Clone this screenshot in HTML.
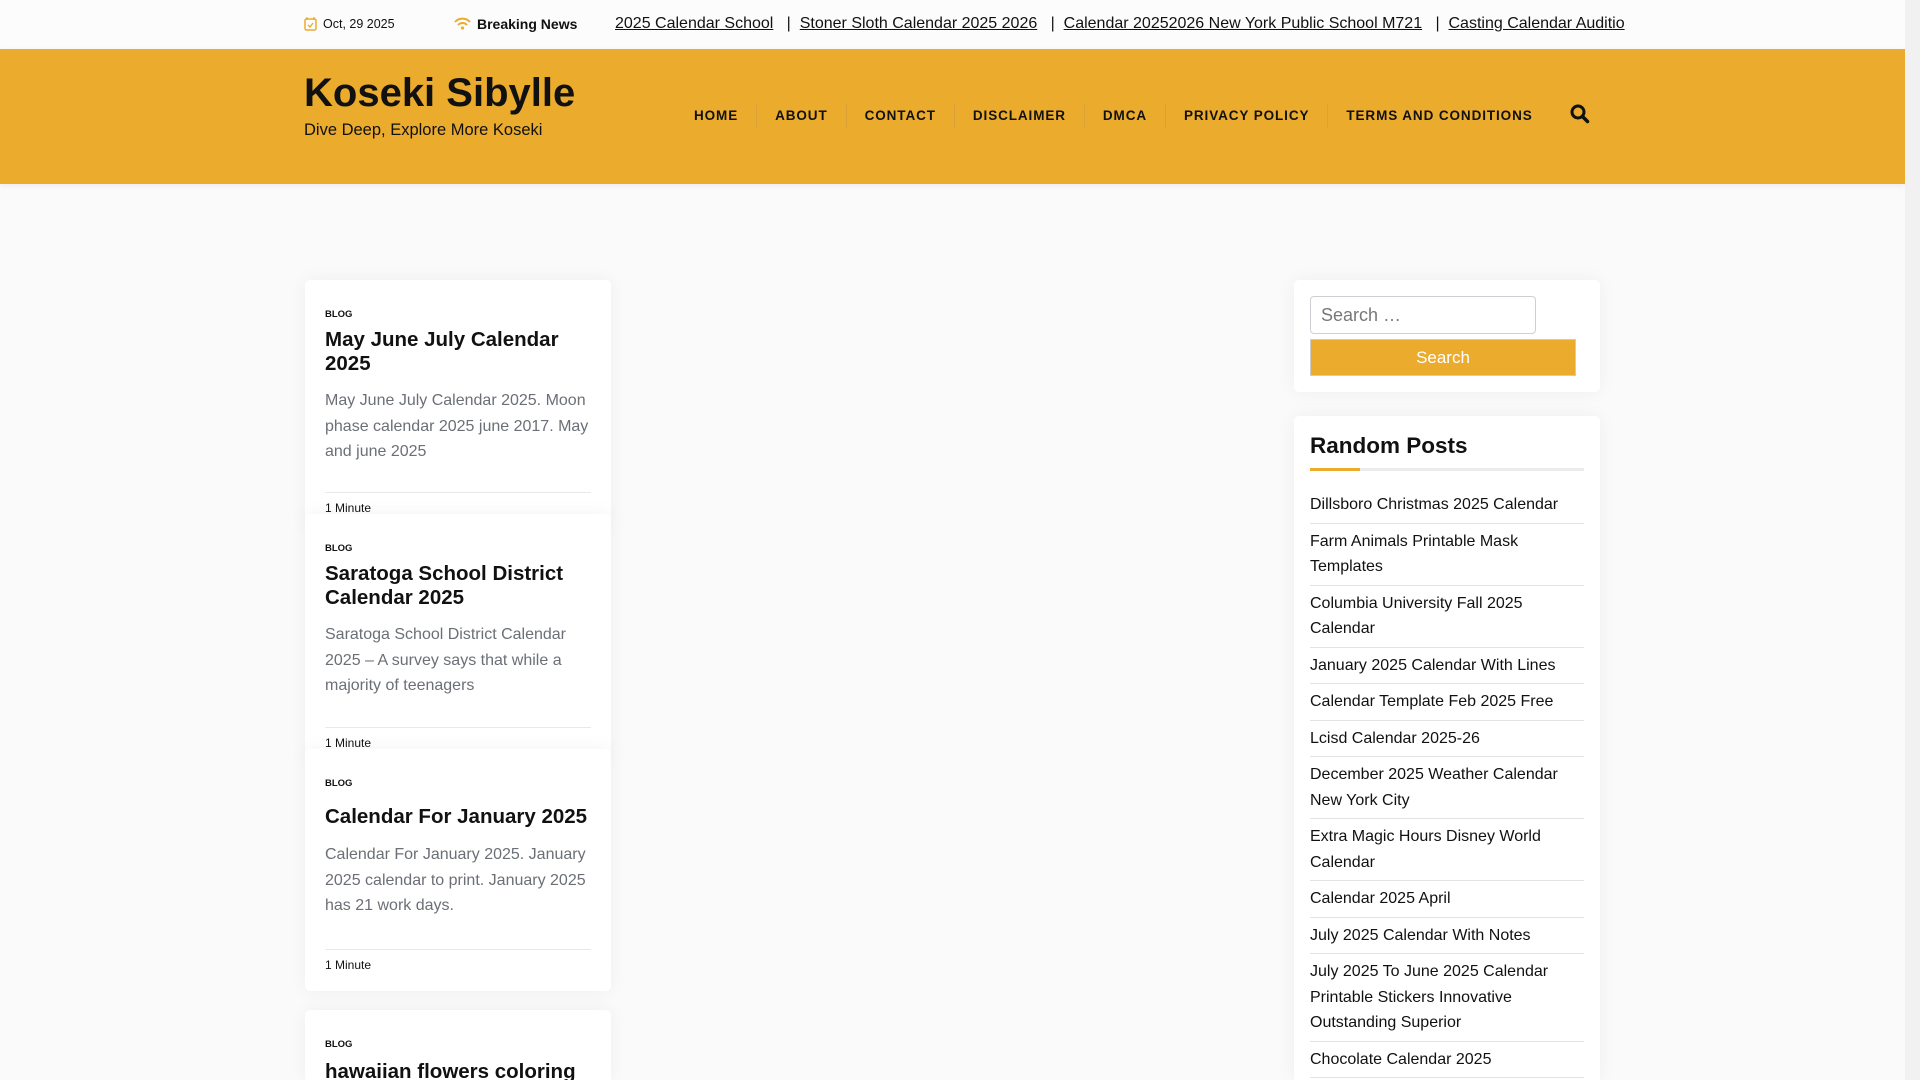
<!DOCTYPE html>
<html><head><meta charset="utf-8"><style>
*{box-sizing:border-box;margin:0;padding:0}
html{width:1920px;height:1080px;overflow:hidden}
body{width:1920px;height:1080px;overflow:hidden;background:#fafafa;font-family:"Liberation Sans",Arial,sans-serif;color:#111;position:relative}
.sb{position:absolute;right:0;top:0;width:15px;height:1080px;background:#f1f1f1}
.top{position:absolute;left:0;top:0;width:1905px;height:49px;background:#fcfcfc}
.top .d{position:absolute;left:304px;top:17px;font-size:12.5px}
.top .b{position:absolute;left:454px;top:16px;font-size:14px;font-weight:bold}
.top .t{position:absolute;left:615px;top:15px;font-size:16px;white-space:nowrap}
.top .t a{color:#111;text-decoration:underline}
.hdr{position:absolute;left:0;top:49px;width:1905px;height:135px;background:#ebab2d;box-shadow:0 2px 6px rgba(0,0,0,.06)}
.logo{position:absolute;left:304px;top:22px;font-size:40px;font-weight:bold}
.tag{position:absolute;left:304px;top:72px;font-size:16.5px}
.nav{position:absolute;left:676px;top:55px;display:flex;font-size:13.5px;font-weight:bold;letter-spacing:.9px}
.nav span{padding:0 18px;border-left:1px solid #dba23a;height:24px;line-height:24px}
.nav span:first-child{border:none}
.card{position:absolute;left:305px;width:306px;background:#fff;border-radius:5px;box-shadow:0 0 18px rgba(0,0,0,.05);padding:0 20px;overflow:hidden}
.card .c{font-size:9.5px;font-weight:bold;margin-top:29px}
.card h2{font-size:20.5px;line-height:24px;margin-top:8px}
.card p{font-size:16px;line-height:25.5px;color:#6b6f76;margin-top:12px}
.card .m{border-top:1px solid #e8e8e8;font-size:12px;padding-top:8px;position:absolute;left:20px;right:20px}
.w{position:absolute;left:1294px;width:306px;background:#fff;border-radius:5px;box-shadow:0 0 18px rgba(0,0,0,.05);padding:0 16px;overflow:hidden}
.in{position:absolute;left:16px;top:16px;width:226px;height:38px;border:1px solid #ccd0d4;border-radius:4px;font-size:18px;color:#777;padding:8px 10px}
.btn{position:absolute;left:16px;top:59px;width:266px;height:37px;background:#ebab2d;border:1px solid #ccc;color:#fff;font-size:17px;text-align:center;line-height:35px}
.rp h3{font-size:22.5px;margin-top:17px}
.ul{margin-top:9px;height:3px;background:#ebebeb;position:relative}
.ul:before{content:"";position:absolute;left:0;top:0;width:50px;height:3px;background:#ebab2d}
.rp ul{list-style:none;margin-top:16px}
.rp li{font-size:16px;line-height:25.5px;padding:5px 0 5px;border-bottom:1px solid #e3e3e3}
</style></head><body>
<div class="top">
<svg style="position:absolute;left:304px;top:17px" width="13" height="14" viewBox="0 0 13 14"><rect x="1" y="2" width="11" height="11" rx="1.5" fill="none" stroke="#ebab2d" stroke-width="1.5"/><path d="M3 0v3M10 0v3M4 8l2 2 3-4" stroke="#ebab2d" stroke-width="1.3" fill="none"/></svg>
<div class="d" style="left:323px">Oct, 29 2025</div>
<svg style="position:absolute;left:454px;top:17px" width="17" height="13" viewBox="0 0 17 13"><path d="M1 5a10 10 0 0 1 15 0M4 8a6 6 0 0 1 9 0" stroke="#ebab2d" stroke-width="2" fill="none"/><circle cx="8.5" cy="11" r="1.6" fill="#ebab2d"/></svg>
<div class="b" style="left:477px">Breaking News</div>
<div class="t"><a>2025 Calendar School</a> &nbsp; | &nbsp;<a>Stoner Sloth Calendar 2025 2026</a> &nbsp; | &nbsp;<a>Calendar 20252026 New York Public School M721</a> &nbsp; | &nbsp;<a>Casting Calendar Auditio</a></div>
</div>
<div class="hdr">
<div class="logo">Koseki Sibylle</div>
<div class="tag">Dive Deep, Explore More Koseki</div>
<div class="nav"><span>HOME</span><span>ABOUT</span><span>CONTACT</span><span>DISCLAIMER</span><span>DMCA</span><span>PRIVACY POLICY</span><span>TERMS AND CONDITIONS</span></div>
<svg style="position:absolute;left:1570px;top:55px" width="20" height="20" viewBox="0 0 20 20"><circle cx="8" cy="8" r="6" fill="none" stroke="#111" stroke-width="3"/><path d="M12.5 12.5l5 5" stroke="#111" stroke-width="3.5" stroke-linecap="round"/></svg>
</div>
<div class="card" style="top:280px;height:245px"><div class="c">BLOG</div><h2>May June July Calendar 2025</h2><p>May June July Calendar 2025. Moon phase calendar 2025 june 2017. May and june 2025</p><div class="m" style="top:212px">1 Minute</div></div>
<div class="card" style="top:514px;height:245px"><div class="c">BLOG</div><h2>Saratoga School District Calendar 2025</h2><p>Saratoga School District Calendar 2025 – A survey says that while a majority of teenagers</p><div class="m" style="top:213px">1 Minute</div></div>
<div class="card" style="top:749px;height:242px"><div class="c">BLOG</div><h2 style="margin-top:16px">Calendar For January 2025</h2><p style="margin-top:13px">Calendar For January 2025. January 2025 calendar to print. January 2025 has 21 work days.</p><div class="m" style="top:200px">1 Minute</div></div>
<div class="card" style="top:1010px;height:70px;border-radius:5px 5px 0 0"><div class="c">BLOG</div><h2 style="margin-top:10px">hawaiian flowers coloring</h2></div>
<div class="w" style="top:280px;height:112px"><div class="in">Search …</div><div class="btn">Search</div></div>
<div class="w rp" style="top:416px;height:664px;border-radius:5px 5px 0 0"><h3>Random Posts</h3><div class="ul"></div><ul>
<li>Dillsboro Christmas 2025 Calendar</li><li>Farm Animals Printable Mask Templates</li><li>Columbia University Fall 2025 Calendar</li><li>January 2025 Calendar With Lines</li><li>Calendar Template Feb 2025 Free</li><li>Lcisd Calendar 2025-26</li><li>December 2025 Weather Calendar New York City</li><li>Extra Magic Hours Disney World Calendar</li><li>Calendar 2025 April</li><li>July 2025 Calendar With Notes</li><li>July 2025 To June 2025 Calendar Printable Stickers Innovative Outstanding Superior</li><li>Chocolate Calendar 2025</li></ul></div>
<div class="sb"></div>
</body></html>
